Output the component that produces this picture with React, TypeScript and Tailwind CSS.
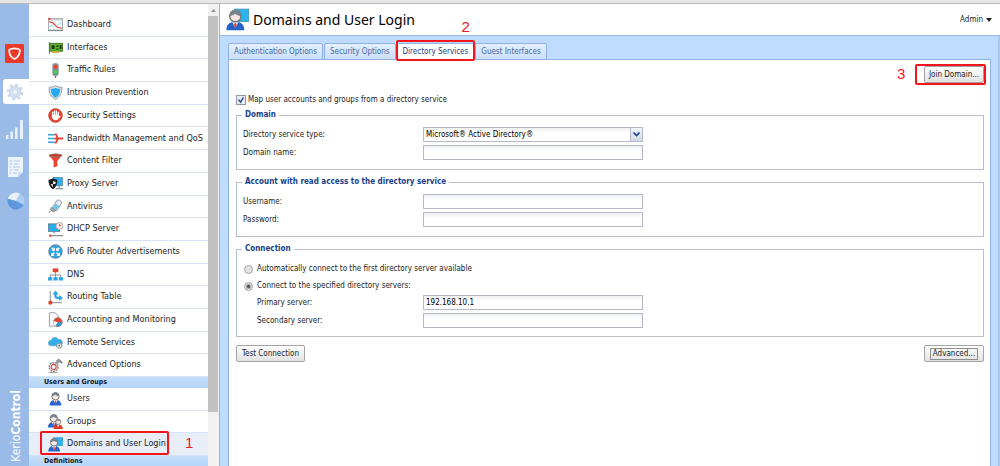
import { useState } from 'react';
import type { ReactNode } from 'react';

interface NavItem {
  label: string;
  icon: ReactNode;
}

const userFigure = (
  <>
    <path d="M.3 15.500c0-4 2-6 6.200-6s6.200 2 6.200 6z" fill="#2563cf" />
    <path d="M4.300 9.500h4.400L6.500 14z" fill="#fff" />
    <path d="M6.500 10.200l.9 1-.5 3h-.8l-.5-3z" fill="#e23b2a" />
    <circle cx="6.500" cy="5.700" r="3.900" fill="#f9e6dc" stroke="#6d7880" strokeWidth="1" />
    <path d="M2.600 5.600C2.600 2.600 4.300 1.300 6.500 1.300S10.400 2.600 10.400 5.600C8.700 5.400 7.200 4.900 6.200 4 5.300 4.900 4 5.500 2.600 5.600z" fill="#77828a" />
  </>
);

const domainFigure = (
  <>
    <rect x="6" y=".8" width="9.800" height="8.500" fill="#2ab4ee" stroke="#3b8fb8" strokeWidth=".6" />
    {userFigure}
  </>
);

const mainItems: NavItem[] = [
  {
    label: 'Dashboard',
    icon: (
      <>
        <rect x=".5" y="1.500" width="15" height="12.500" fill="#f7f8f9" stroke="#a5acb1" />
        <path d="M1 2h14v1.600H1z" fill="#c6cbcf" />
        <path d="M1 11l5-3 3 2 6-5" fill="none" stroke="#8ed3f3" strokeWidth="1" />
        <path d="M1 5l4 1 5 5 5 1" fill="none" stroke="#e8402f" strokeWidth="1.200" />
        <path d="M0 14.500h16" stroke="#777f85" strokeWidth="1" />
        <circle cx="1.500" cy="2" r="1.300" fill="#e8402f" />
      </>
    ),
  },
  {
    label: 'Interfaces',
    icon: (
      <>
        <path d="M1.500 2v13" stroke="#8d9297" strokeWidth="1.300" />
        <rect x="2" y="3.500" width="13.500" height="8.500" fill="#5fae2d" stroke="#2c6414" strokeWidth=".8" />
        <path d="M4 5.500h3v4H4zM9 5.500h2v2H9zM12.500 5.500h2v4h-2zM9 9h2v1.500H9z" fill="#173c0b" />
        <path d="M4 12h8v1.800H4z" fill="#d9b53a" />
      </>
    ),
  },
  {
    label: 'Traffic Rules',
    icon: (
      <>
        <path d="M8 13v3" stroke="#777" strokeWidth="1.500" />
        <rect x="5" y=".5" width="6" height="13" rx="2" fill="#81888d" stroke="#9fa5a9" />
        <circle cx="8" cy="4" r="2" fill="#ee3d2c" />
        <circle cx="8" cy="9.600" r="2.200" fill="#3ed264" />
      </>
    ),
  },
  {
    label: 'Intrusion Prevention',
    icon: (
      <>
        <path d="M8 .7c2 1.400 4.500 1.800 6.700 1.500.5 6-1.700 10.800-6.700 13.200C3 13 .8 8.200 1.300 2.200 3.500 2.500 6 2.100 8 .7z" fill="#dfe3e6" stroke="#8a9298" strokeWidth=".9" />
        <path d="M8 2.800c1.600 1 3.200 1.300 5 1.200.2 4.400-1.500 7.600-5 9.600-3.500-2-5.200-5.200-5-9.600 1.800.1 3.400-.2 5-1.200z" fill="#23aaf0" />
      </>
    ),
  },
  {
    label: 'Security Settings',
    icon: (
      <>
        <circle cx="8" cy="8" r="7.200" fill="#ed4632" stroke="#b7372a" strokeWidth="1" />
        <path d="M5 8V4.600M7 7.500V3.200M9 7.500V3.400M11 8V4.800" stroke="#fff" strokeWidth="1.400" strokeLinecap="round" />
        <path d="M4.300 7.500h7.400v2c0 2-1.400 3.500-3.600 3.500S4.300 11.500 4.300 9.500z" fill="#fff" />
        <path d="M11.500 10.500l1.500-2" stroke="#fff" strokeWidth="1.300" />
      </>
    ),
  },
  {
    label: 'Bandwidth Management and QoS',
    icon: (
      <>
        <path d="M0 4h7M0 8h7M0 12h7" stroke="#2aa3e3" strokeWidth="1.700" />
        <path d="M7 3.500h1.500L10.500 8l-2 4.500H7M10.500 8H16M7 8h3" fill="none" stroke="#e6402f" strokeWidth="1.900" />
      </>
    ),
  },
  {
    label: 'Content Filter',
    icon: (
      <>
        <path d="M1 2.500h14L10 8.500V14l-4 1.500v-7z" fill="#ea4432" />
        <ellipse cx="8" cy="2.600" rx="7" ry="1.700" fill="#c43b2c" stroke="#858b90" strokeWidth=".7" />
      </>
    ),
  },
  {
    label: 'Proxy Server',
    icon: (
      <>
        <rect x="6" y="1.500" width="9.500" height="9" fill="#27b2ef" stroke="#5b7d90" strokeWidth=".7" />
        <path d="M8 13.500h8M12 10.500v3" stroke="#888e93" strokeWidth="1.200" />
        <path d="M.5 4c2 0 3.500-.6 4.700-1.500C6.500 3.400 8 4 10 4c0 5-1.600 8.300-4.800 10C2 12.300.5 9 .5 4z" fill="#17191b" />
        <path d="M5.500 5.200c.8.500 1.600.7 2.600.8 0 1-.1 1.800-.3 2.600H5.500z" fill="#fff" />
        <path d="M5.200 8.600H3c.4 1.500 1.100 2.600 2.200 3.400z" fill="#dfe3e5" />
      </>
    ),
  },
  {
    label: 'Antivirus',
    icon: (
      <>
        <path d="M9.500 1.500c2.500-1 5.500.8 5 3L9 12.500 4.500 9.500z" fill="#e9edf0" stroke="#868e94" />
        <path d="M8.500 5l3.700 2.500L9 12l-4.300-2.900z" fill="#6fc5ee" />
        <path d="M3.500 9l5 3.500-3 1-3-2zM3.500 12L.8 15" fill="#a4abb0" stroke="#868e94" />
      </>
    ),
  },
  {
    label: 'DHCP Server',
    icon: (
      <>
        <rect x=".5" y="2" width="12" height="8" fill="#27aeea" stroke="#50788c" strokeWidth=".8" />
        <path d="M6.500 10v2.500M1 14.500h15" stroke="#868c91" strokeWidth="1.300" />
        <circle cx="12.300" cy="4.200" r="3.700" fill="#f5eeee" stroke="#b99e9b" strokeWidth=".9" />
        <path d="M12.300 2v2.400l1.700-.9" fill="none" stroke="#db4b3b" strokeWidth=".9" />
        <circle cx="2.500" cy="14.500" r="1.300" fill="#e6402f" />
      </>
    ),
  },
  {
    label: 'IPv6 Router Advertisements',
    icon: (
      <>
        <circle cx="8" cy="8" r="7.200" fill="#2ba4e2" stroke="#668393" strokeWidth="1" />
        <path d="M4 4l2.800 2.800M12 4L9.200 6.800M4 12l2.800-2.800M12 12L9.200 9.200" stroke="#fff" strokeWidth="1.700" />
        <path d="M3.800 7.200h3.500V3.700zM12.200 7.200H8.700V3.700zM3.300 12.700V9l3.700 3.700zM12.700 12.700V9L9 12.700z" fill="#fff" />
      </>
    ),
  },
  {
    label: 'DNS',
    icon: (
      <>
        <path d="M8 5v7M2.500 12V8.500h11V12" fill="none" stroke="#92989d" strokeWidth="1.200" />
        <path d="M5 1.500h6v4H5z" fill="#e8402f" />
        <path d="M0 11h4.500v3.500H0zM5.800 11h4.500v3.500H5.800zM11.500 11H16v3.500h-4.500z" fill="#2ba4e2" />
      </>
    ),
  },
  {
    label: 'Routing Table',
    icon: (
      <>
        <path d="M2.500 1v12.500H15" fill="none" stroke="#9ba0a5" strokeWidth="1.300" />
        <path d="M8 4v2.500c0 1.500 1 2 2.500 2H12" fill="none" stroke="#2aa5e5" strokeWidth="2.400" />
        <path d="M8 .5l3.300 4.200H4.700zM16 8.500l-4.200 3.300V5.200z" fill="#2aa5e5" />
        <circle cx="2.500" cy="13.500" r="2.200" fill="#e8402f" />
      </>
    ),
  },
  {
    label: 'Accounting and Monitoring',
    icon: (
      <>
        <path d="M1.500.8h6L11 4v11H1.500z" fill="#fafbfc" stroke="#959ba0" strokeWidth="1" />
        <circle cx="10.500" cy="10.800" r="4.700" fill="#e44434" stroke="#8f6661" strokeWidth=".7" />
        <path d="M10.500 10.800L6 9.500a4.700 4.700 0 002 5.300z" fill="#f5f5f5" />
        <path d="M10.500 10.800h4.700a4.700 4.700 0 01-7 3.800z" fill="#279fdf" />
      </>
    ),
  },
  {
    label: 'Remote Services',
    icon: (
      <>
        <path d="M3.500 11.500a3 3 0 01-.2-6A4.300 4.300 0 0111 4.500a3.500 3.500 0 011.500 7z" fill="#34adea" stroke="#6da5c2" strokeWidth=".7" />
        <circle cx="12" cy="11.500" r="2.700" fill="#e6e9eb" stroke="#878e94" strokeWidth="1.400" strokeDasharray="1.400 .7" />
        <circle cx="12" cy="11.500" r="1" fill="#777e84" />
      </>
    ),
  },
  {
    label: 'Advanced Options',
    icon: (
      <>
        <path d="M8.500 3l3-2.500 4.500 4-2 1.500-2-1.500L9.500 7z" fill="#8d9499" />
        <circle cx="6" cy="9.500" r="4.700" fill="#f0f1f2" stroke="#858c91" strokeWidth="1.600" strokeDasharray="2 .9" />
        <circle cx="6" cy="9.500" r="2.700" fill="none" stroke="#e24938" strokeWidth="1.200" />
        <path d="M1 15.500h9" stroke="#888f94" strokeWidth=".9" />
      </>
    ),
  },
];

const userItems: NavItem[] = [
  { label: 'Users', icon: <g transform="translate(1.500 0)">{userFigure}</g> },
  {
    label: 'Groups',
    icon: (
      <>
        <g transform="translate(-.3 -1)">{userFigure}</g>
        <path d="M6 16c0-3.500 1.800-4.800 4.800-4.800S15.800 12.500 15.800 16z" fill="#e13a2a" />
        <path d="M9.600 11.200h2.600l-1.300 2.800z" fill="#fff" />
        <circle cx="10.900" cy="8.300" r="2.800" fill="#f9e6dc" stroke="#7a838a" strokeWidth=".9" />
        <path d="M8.200 8c0-2 1.200-3 2.700-3s2.700 1 2.700 3c-1.200-.1-2.200-.4-3-1-.7.600-1.500.9-2.400 1z" fill="#858e95" />
      </>
    ),
  },
  { label: 'Domains and User Login', icon: domainFigure },
];

const tabs = ['Authentication Options', 'Security Options', 'Directory Services', 'Guest Interfaces'];

const inputClass =
  'h-[15px] w-[220px] rounded-none border border-[#b5b8c8] bg-linear-to-b from-[#eff0f1] to-white to-40% px-[2px] text-[8px] leading-[13px] text-black outline-none';
const buttonClass =
  'flex h-[17px] items-center justify-center rounded-[2px] border border-[#a3a3a3] bg-linear-to-b from-white to-[#e2e2e2] text-[8px] leading-[10px] text-[#222]';

function NavRow({ item, active, mark }: { item: NavItem; active?: boolean; mark?: string }) {
  return (
    <a
      href="#"
      className={`relative flex min-h-0 flex-1 items-center gap-1 border-b border-[#d5e3f4] pl-[19px] text-[9px] whitespace-nowrap text-[#1c1c1c] ${active ? 'bg-[#e8eef8]' : 'bg-white'}`}
    >
      <svg viewBox="0 0 16 16" className="size-[15px] shrink-0" aria-hidden="true">
        {item.icon}
      </svg>
      <span>{item.label}</span>
      {mark && (
        <>
          <span className="absolute -top-[2px] bottom-0 left-[11px] w-[129px] rounded-[2px] border-2 border-[#f3141c]" />
          <Mark className="absolute top-[2px] left-[156px]">{mark}</Mark>
        </>
      )}
    </a>
  );
}

function Mark({ children, className }: { children: ReactNode; className: string }) {
  return (
    <span className={`font-['Liberation_Sans',Arial,sans-serif] text-[15px] leading-4 text-[#f3141c] ${className}`}>
      {children}
    </span>
  );
}

function NavHeading({ children }: { children: ReactNode }) {
  return (
    <h2 className="flex h-[11px] shrink-0 items-center bg-linear-to-b from-[#c6dffb] to-[#b3d3f8] pl-[15px] text-[7px] leading-[11px] font-bold text-[#10161d]">
      {children}
    </h2>
  );
}

function Field({ id, label, indent, children }: { id: string; label: string; indent?: boolean; children: ReactNode }) {
  return (
    <div className="flex items-center">
      <label htmlFor={id} className={`shrink-0 ${indent ? 'ml-[14px] w-[166px]' : 'w-[180px]'}`}>
        {label}
      </label>
      {children}
    </div>
  );
}

function Group({ title, className, children }: { title: string; className: string; children: ReactNode }) {
  return (
    <fieldset className={`border border-[#b9bccb] pl-[6px] ${className}`}>
      <legend className="-ml-px px-[3px] text-[8px] leading-[12px] font-bold text-[#15428b]">{title}</legend>
      {children}
    </fieldset>
  );
}

function Rail() {
  return (
    <div className="flex w-[29px] shrink-0 flex-col bg-[#9abae8]">
      <button aria-label="Kerio Control" className="mt-[40px] ml-[5px] flex size-[19px] items-center justify-center rounded-[1px] bg-[#ea3829]">
        <svg viewBox="0 0 16 16" className="size-[15px]">
          <path d="M8 2.500c2 0 4 .5 5.700 1.500.2 4-1.700 7.800-5.700 10-4-2.200-5.900-6-5.700-10C4 3 6 2.500 8 2.500z" fill="none" stroke="#fff" strokeWidth="1.700" />
        </svg>
      </button>
      <button aria-label="Configuration" className="mt-4 ml-[3px] flex h-[25px] items-center justify-center rounded-l-[3px] bg-white pr-[2px]">
        <svg viewBox="0 0 18 18" className="size-[18px]">
          <circle cx="9" cy="9" r="7" fill="none" stroke="#c6d7ee" strokeWidth="2.600" strokeDasharray="2.750 2.750" />
          <circle cx="9" cy="9" r="5.700" fill="#d6e2f3" stroke="#c3d4ec" />
          <circle cx="9" cy="9" r="2.400" fill="#fff" stroke="#bfd1eb" />
        </svg>
      </button>
      <button aria-label="Status" className="mt-4 ml-[6px] size-[19px]">
        <svg viewBox="0 0 19 19">
          <path d="M0 15h2.500v4H0zM4.500 11.500H7V19H4.500zM9 7.500h2.500V19H9zM14 0h3v19h-3z" fill="#e9f1fb" />
        </svg>
      </button>
      <button aria-label="Logs" className="mt-[18px] ml-[7px] h-[20px] w-[17px]">
        <svg viewBox="0 0 17 20">
          <path d="M1 0h15v15l-5 5H1z" fill="#eef4fb" />
          <path d="M2.500 4h3M7 4h6M2.500 7h3M7 7h5M2.500 10h2M6 10h7M2.500 13h3M7 13h5M2.500 16h2M6 16h4" stroke="#afc5e5" strokeWidth="1.200" />
          <path d="M16 15l-5 5v-4.500z" fill="#cbdcf2" />
        </svg>
      </button>
      <button aria-label="Statistics" className="mt-[15px] ml-[7px] size-[18px]">
        <svg viewBox="0 0 18 18">
          <circle cx="9" cy="9" r="8.500" fill="#86b2ea" />
          <path d="M9 9L.8 6.700A8.500 8.500 0 0113 1.500z" fill="#e9f1fb" />
          <path d="M9 9l4-7.500A8.500 8.500 0 0116.500 13z" fill="#aecdf3" />
          <path d="M9 9L.8 6.700A8.500 8.500 0 0016.500 13z" fill="#5f98df" />
        </svg>
      </button>
      <div className="mt-auto mb-[4px] ml-[2px] rotate-180 self-center text-[12px] leading-[18px] text-white [writing-mode:vertical-rl]">
        Kerio<b>Control</b>
      </div>
    </div>
  );
}

export default function App() {
  const [tab, setTab] = useState('Directory Services');
  const [mapUsers, setMapUsers] = useState(true);
  const [mode, setMode] = useState('specified');
  const [primary, setPrimary] = useState('192.168.10.1');

  return (
    <div className="flex h-screen flex-col overflow-hidden bg-white font-['DejaVu_Sans_Condensed',Tahoma,'DejaVu_Sans',sans-serif] text-[#222]">
      <div className="h-1 shrink-0 border-b border-[#b9b9b9] bg-[#e6e6e6]" />
      <div className="flex min-h-0 flex-1">
        <Rail />

        {/* Navigation */}
        <nav className="flex w-[179px] shrink-0 flex-col pt-[10px]">
          <div className="flex h-[363px] shrink-0 flex-col">
            {mainItems.map((item) => (
              <NavRow key={item.label} item={item} />
            ))}
          </div>
          <NavHeading>Users and Groups</NavHeading>
          <div className="flex h-[68px] shrink-0 flex-col">
            {userItems.map((item, i) => (
              <NavRow key={item.label} item={item} active={i === 2} mark={i === 2 ? '1' : undefined} />
            ))}
          </div>
          <NavHeading>Definitions</NavHeading>
        </nav>

        {/* Scrollbar */}
        <div className="flex w-[11px] shrink-0 flex-col bg-[#f1f1f1]">
          <div className="flex h-3 items-center justify-center">
            <svg viewBox="0 0 6 4" className="h-[3px] w-[5px]">
              <path d="M3 0l3 4H0z" fill="#8d8d8d" />
            </svg>
          </div>
          <div className="h-[396px] w-[10px] bg-[#c1c1c1]" />
        </div>

        {/* Content */}
        <div className="flex min-w-0 flex-1 flex-col border-l border-[#8fb3e3]">
          <header className="flex h-8 shrink-0 items-center border-b border-[#99bbe8] pr-2 pl-[6px]">
            <svg viewBox="0 0 16 16" className="size-[23px]" aria-hidden="true">
              {domainFigure}
            </svg>
            <h1 className="ml-1 font-['Noto_Sans',Tahoma,sans-serif] text-[14px] leading-5 text-black">Domains and User Login</h1>
            <button className="ml-auto flex items-center gap-[3px] text-[8px]">
              Admin
              <svg viewBox="0 0 6 4" className="h-1 w-[6px]">
                <path d="M0 0h6L3 4z" fill="#222" />
              </svg>
            </button>
          </header>

          <div className="flex min-h-0 flex-1 flex-col border-r-2 border-[#a9c8f0] bg-[#bfdbff] pt-[7px] pr-[7px] pl-2">
            <div role="tablist" className="relative z-10 -mb-px flex h-[17px] shrink-0 gap-px">
              {tabs.map((name) => (
                <div key={name} className="relative flex">
                  <button
                    role="tab"
                    aria-selected={tab === name}
                    onClick={() => setTab(name)}
                    className={`rounded-t-[2px] border border-[#8db2e3] px-[5px] text-[8px] leading-[15px] whitespace-nowrap ${tab === name ? 'border-b-white bg-white text-[#15428b]' : 'bg-linear-to-b from-[#e4effd] to-[#cbdff9] text-[#416aa3]'}`}
                  >
                    {name}
                  </button>
                  {name === 'Directory Services' && (
                    <>
                      <span className="pointer-events-none absolute -inset-x-px -top-[3px] -bottom-px rounded-[2px] border-2 border-[#f3141c]" />
                      <Mark className="absolute -top-[24px] left-[65px]">2</Mark>
                    </>
                  )}
                </div>
              ))}
            </div>

            <main className="flex min-h-0 flex-1 flex-col border border-b-0 border-[#8db2e3] bg-white pt-[6px] pr-[6px] pl-[7px] text-[8px] leading-[10px]">
              <div className="flex items-center justify-end">
                <div className="relative">
                  <Mark className="absolute top-0 -left-[27px]">3</Mark>
                  <button className={`${buttonClass} w-[60px]`}>Join Domain...</button>
                  <span className="pointer-events-none absolute -inset-y-[2px] -right-[2px] -left-[9px] rounded-[2px] border-2 border-[#f3141c]" />
                </div>
              </div>

              <label className="mt-[12px] flex items-center gap-[2px]">
                <span className="relative flex">
                  <input
                    type="checkbox"
                    checked={mapUsers}
                    onChange={(e) => setMapUsers(e.target.checked)}
                    className="size-[10px] appearance-none border border-[#8f97a6] bg-[#e9edf3]"
                  />
                  {mapUsers && (
                    <svg viewBox="0 0 10 10" className="pointer-events-none absolute inset-0 size-[10px]">
                      <path d="M2.600 4.600l1.900 2.600L7.500 2.400" fill="none" stroke="#2d4f93" strokeWidth="1.500" />
                    </svg>
                  )}
                </span>
                Map user accounts and groups from a directory service
              </label>

              <Group title="Domain" className="mt-1 h-[61px]">
                <div className="mt-[6px] flex flex-col gap-[3px]">
                  <Field id="type" label="Directory service type:">
                    <div className="relative flex">
                      <select id="type" className={`${inputClass} appearance-none`}>
                        <option>Microsoft® Active Directory®</option>
                        <option>Apple Open Directory</option>
                      </select>
                      <span className="pointer-events-none absolute inset-y-0 right-0 flex w-[13px] items-center justify-center border border-[#b5b8c8] bg-linear-to-b from-[#f2f6fb] to-[#cfd9e8]">
                        <svg viewBox="0 0 7 5" className="h-[5px] w-[7px]">
                          <path d="M.5.5l3 3 3-3" fill="none" stroke="#1f4a9a" strokeWidth="1.700" />
                        </svg>
                      </span>
                    </div>
                  </Field>
                  <Field id="domain" label="Domain name:">
                    <input id="domain" type="text" className={inputClass} />
                  </Field>
                </div>
              </Group>

              <Group title="Account with read access to the directory service" className="mt-[6px] h-[61px]">
                <div className="mt-[6px] flex flex-col gap-[3px]">
                  <Field id="username" label="Username:">
                    <input id="username" type="text" className={inputClass} />
                  </Field>
                  <Field id="password" label="Password:">
                    <input id="password" type="password" className={inputClass} />
                  </Field>
                </div>
              </Group>

              <Group title="Connection" className="mt-[6px] h-[94px]">
                <div className="mt-[9px] flex flex-col gap-[7px]">
                  {[
                    { value: 'auto', label: 'Automatically connect to the first directory server available' },
                    { value: 'specified', label: 'Connect to the specified directory servers:' },
                  ].map(({ value, label }) => (
                    <label key={value} className="flex items-center gap-1 pl-px">
                      <input
                        type="radio"
                        name="mode"
                        checked={mode === value}
                        onChange={() => setMode(value)}
                        className="size-[9px] appearance-none rounded-full border border-[#a5a5a5] bg-[#e4e4e4] checked:bg-[radial-gradient(circle,#555_0_1px,#e4e4e4_3px)]"
                      />
                      {label}
                    </label>
                  ))}
                </div>
                <div className="mt-1 flex flex-col gap-[3px]">
                  <Field id="primary" label="Primary server:" indent>
                    <input id="primary" type="text" value={primary} onChange={(e) => setPrimary(e.target.value)} className={inputClass} />
                  </Field>
                  <Field id="secondary" label="Secondary server:" indent>
                    <input id="secondary" type="text" className={inputClass} />
                  </Field>
                </div>
              </Group>

              <div className="mt-2 flex justify-between">
                <button className={`${buttonClass} w-[69px]`}>Test Connection</button>
                <button className={`${buttonClass} w-[60px]`}>
                  <span className="border border-[#8f8f8f] px-[2px]">Advanced...</span>
                </button>
              </div>
            </main>
          </div>
        </div>
      </div>
    </div>
  );
}
